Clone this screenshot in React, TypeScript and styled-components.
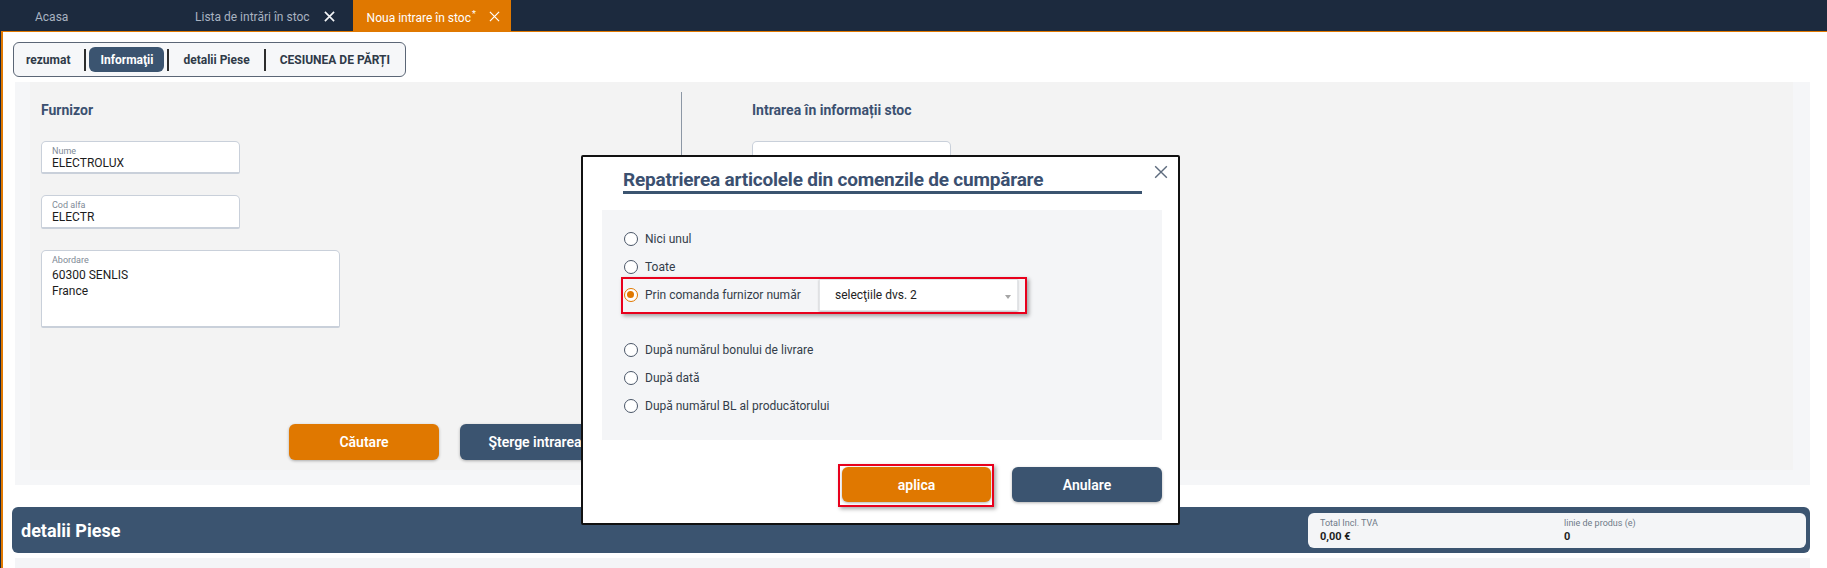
import React from "react";
import styled, { createGlobalStyle } from "styled-components";

const NAVY = "#1c2a3e";
const ORANGE = "#e07800";
const SLATE = "#3b5470";
const TEXT = "#2f3a48";

const GlobalStyle = createGlobalStyle`
  html, body { margin: 0; padding: 0; height: 100%; overflow: hidden; }
  body { font-family: Roboto, "Liberation Sans", Arial, sans-serif; background: ${NAVY}; }
  * { box-sizing: border-box; }
`;

const Page = styled.div`
  display: flex;
  flex-direction: column;
  height: 568px;
  overflow: hidden;
  background: ${NAVY};
`;

const TabBar = styled.div`
  display: flex;
  height: 31px;
  background: ${NAVY};
  flex-shrink: 0;
`;

const HomeTab = styled.div`
  display: flex;
  align-items: center;
  width: 181px;
  padding: 2px 0 0 35px;
  font-size: 12px;
  color: #a9b3c1;
`;

const Tab = styled.div<{ $active?: boolean }>`
  display: flex;
  align-items: center;
  gap: ${(p) => (p.$active ? 13 : 14)}px;
  padding: 2px ${(p) => (p.$active ? 11 : 18)}px 0 14px;
  font-size: 12px;
  color: ${(p) => (p.$active ? "#ffffff" : "#a9b3c1")};
  background: ${(p) => (p.$active ? ORANGE : "transparent")};
  sup { font-size: 9px; margin-left: 1px; }
`;

const CloseIcon = ({ size = 11, color = "#fff", w = 1.5 }: { size?: number; color?: string; w?: number }) => (
  <svg width={size} height={size} viewBox="0 0 12 12">
    <path d="M1 1 L11 11 M11 1 L1 11" stroke={color} strokeWidth={w} fill="none" />
  </svg>
);

const Content = styled.div`
  flex: 1;
  min-height: 0;
  overflow: hidden;
  margin-left: 1px;
  background: #ffffff;
  border-top: 1px solid ${ORANGE};
  border-left: 2px solid ${ORANGE};
  padding: 10px 17px 0 10px;
  display: flex;
  flex-direction: column;
`;

const SubTabs = styled.div`
  display: flex;
  align-items: center;
  align-self: flex-start;
  flex-shrink: 0;
  width: 393px;
  height: 35px;
  padding: 0 1px;
  border: 1px solid #5b6676;
  border-radius: 6px;
  background: #f6f7f9;
`;

const SubTab = styled.div<{ $active?: boolean }>`
  display: flex;
  align-items: center;
  height: 25px;
  padding: 0 11px;
  border-radius: 6px;
  font-size: 12px;
  font-weight: 700;
  color: ${(p) => (p.$active ? "#ffffff" : TEXT)};
  background: ${(p) => (p.$active ? SLATE : "transparent")};
  white-space: nowrap;
`;

const SubSep = styled.span`
  width: 2px;
  height: 22px;
  margin: 0 3px;
  background: #2d2d2d;
`;

const OuterPanel = styled.div`
  flex-shrink: 0;
  margin: 5px 0 0 2px;
  padding: 0 17px 15px 15px;
  background: #f5f6f8;
`;

const InnerPanel = styled.div`
  background: #f3f3f3;
  padding: 10px 0 10px 0;
  display: flex;
  flex-direction: column;
`;

const Columns = styled.div`
  display: flex;
  height: 310px;
`;

const LeftCol = styled.div`
  width: 651px;
  padding: 8px 0 0 11px;
  display: flex;
  flex-direction: column;
`;

const RightCol = styled.div`
  flex: 1;
  border-left: 1px solid #8c97a5;
  padding: 8px 0 0 70px;
  display: flex;
  flex-direction: column;
`;

const Heading = styled.div`
  font-size: 14px;
  font-weight: 700;
  line-height: 20px;
  color: #3b5070;
  margin-bottom: 21px;
`;

const Field = styled.div<{ $w: number; $h: number }>`
  width: ${(p) => p.$w}px;
  height: ${(p) => p.$h}px;
  background: #ffffff;
  border: 1px solid #c9d0da;
  border-bottom-width: 2px;
  border-radius: 5px 5px 2px 2px;
  padding: 4px 10px 0 10px;
  margin-bottom: 21px;
`;

const FieldLabel = styled.div`
  font-size: 9px;
  line-height: 10px;
  color: #808a96;
`;

const FieldValue = styled.div`
  font-size: 12px;
  line-height: 14px;
  color: #1c1c1c;
`;

const AreaValue = styled.div`
  font-size: 12px;
  line-height: 16px;
  color: #1c1c1c;
  margin-top: 2px;
`;

const ButtonRow = styled.div<{ $pad?: number }>`
  display: flex;
  gap: 21px;
  margin-top: 22px;
  padding-left: ${(p) => p.$pad ?? 0}px;
`;

const Button = styled.button<{ $kind: "primary" | "secondary"; $w: number; $h: number }>`
  width: ${(p) => p.$w}px;
  height: ${(p) => p.$h}px;
  border: none;
  border-radius: 6px;
  background: ${(p) => (p.$kind === "primary" ? ORANGE : SLATE)};
  color: #ffffff;
  font-family: Roboto, sans-serif;
  font-size: 14px;
  font-weight: 600;
  box-shadow: 0 1px 3px rgba(0, 0, 0, 0.3);
  white-space: nowrap;
  overflow: hidden;
  padding: 0;
`;

const SectionBar = styled.div`
  flex-shrink: 0;
  margin: 22px 0 0 -1px;
  height: 46px;
  background: ${SLATE};
  border-radius: 6px;
  display: flex;
  align-items: center;
  justify-content: space-between;
  padding: 0 4px 0 9px;
`;

const SectionTitle = styled.div`
  font-size: 18px;
  font-weight: 700;
  color: #ffffff;
`;

const Summary = styled.div`
  width: 498px;
  height: 35px;
  background: #f4f5f7;
  border-radius: 6px;
  display: grid;
  grid-template-columns: 244px 1fr;
  padding: 4px 12px 0;
`;

const SumLabel = styled.div`
  font-size: 9px;
  line-height: 12px;
  color: #6f7a88;
`;

const SumValue = styled.div`
  font-size: 11px;
  line-height: 16px;
  font-weight: 700;
  color: #1e1e1e;
`;

const BottomPanel = styled.div`
  flex-shrink: 0;
  margin: 5px 0 0 2px;
  height: 40px;
  background: #f4f5f7;
`;

/* Dialog */

const Dialog = styled.div`
  position: fixed;
  left: 581px;
  top: 155px;
  width: 599px;
  height: 370px;
  background: #ffffff;
  border: 2px solid #111;
  border-radius: 2px;
  padding: 12px 16px 21px 19px;
  display: flex;
  flex-direction: column;
`;

const DialogClose = styled.button`
  position: absolute;
  top: 8px;
  right: 10px;
  width: 14px;
  height: 14px;
  padding: 0;
  border: none;
  background: transparent;
  display: flex;
`;

const DialogTitle = styled.div`
  margin: 0 20px 0 21px;
  font-size: 19px;
  line-height: 22px;
  font-weight: 700;
  color: #3b5070;
  letter-spacing: -0.2px;
  border-bottom: 3px solid ${SLATE};
  white-space: nowrap;
`;

const OptionsPanel = styled.div`
  margin-top: 16px;
  height: 230px;
  background: #f4f5f7;
  padding: 15px 22px 20px 22px;
  display: flex;
  flex-direction: column;
`;

const OptionRow = styled.div<{ $gapAfter?: boolean; $highlight?: boolean }>`
  position: relative;
  display: flex;
  align-items: center;
  height: 28px;
  margin-bottom: ${(p) => (p.$gapAfter ? 28 : 0)}px;
  align-self: flex-start;
  ${(p) =>
    p.$highlight &&
    `
    &::after {
      content: "";
      position: absolute;
      inset: -4px -9px -5px -3px;
      border: 2px solid #e8001c;
      box-shadow: 2px 2px 4px rgba(0,0,0,0.35);
      pointer-events: none;
    }
  `}
`;

const OptionLabel = styled.label<{ $w?: number }>`
  display: flex;
  align-items: center;
  gap: 7px;
  font-size: 12px;
  color: #333d4a;
  width: ${(p) => (p.$w ? `${p.$w}px` : "auto")};
`;

const Radio = styled.span<{ $checked?: boolean }>`
  position: relative;
  width: 14px;
  height: 14px;
  border-radius: 50%;
  border: 1.5px solid ${(p) => (p.$checked ? ORANGE : "#4a5668")};
  background: #fff;
  flex-shrink: 0;
  &::after {
    content: "";
    display: ${(p) => (p.$checked ? "block" : "none")};
    position: absolute;
    left: 2px;
    top: 2px;
    width: 7px;
    height: 7px;
    border-radius: 50%;
    background: ${ORANGE};
  }
`;

const Select = styled.div`
  position: relative;
  width: 199px;
  height: 32px;
  background: #ffffff;
  border: 1px solid #e3e5e8;
  box-shadow: 0 1px 2px rgba(0, 0, 0, 0.25);
  display: flex;
  align-items: center;
  padding-left: 15px;
  font-size: 12px;
  color: #222;
  &::after {
    content: "";
    position: absolute;
    right: 6px;
    top: 15px;
    border-left: 3.5px solid transparent;
    border-right: 3.5px solid transparent;
    border-top: 4px solid #a5a5a5;
  }
`;

const DialogActions = styled.div`
  margin-top: 27px;
  display: flex;
  justify-content: flex-end;
  gap: 21px;
`;

const Highlight = styled.div`
  position: relative;
  display: flex;
  &::after {
    content: "";
    position: absolute;
    inset: -3px -3px -5px -4px;
    border: 2px solid #e8001c;
    box-shadow: 2px 2px 4px rgba(0, 0, 0, 0.35);
    pointer-events: none;
  }
`;

const options = [
  { label: "Nici unul" },
  { label: "Toate" },
  { label: "Prin comanda furnizor număr", checked: true, select: true },
  { label: "După numărul bonului de livrare" },
  { label: "După dată" },
  { label: "După numărul BL al producătorului" },
];

export default function App() {
  return (
    <>
      <GlobalStyle />
      <Page>
        <TabBar>
          <HomeTab>Acasa</HomeTab>
          <Tab>
            Lista de intrări în stoc
            <CloseIcon size={11} color="#f2f4f7" w={1.8} />
          </Tab>
          <Tab $active>
            <span>
              Noua intrare în stoc<sup>*</sup>
            </span>
            <CloseIcon size={11} color="#ffffff" w={1.3} />
          </Tab>
        </TabBar>
        <Content>
          <SubTabs>
            <SubTab>rezumat</SubTab>
            <SubSep />
            <SubTab $active>Informaţii</SubTab>
            <SubSep />
            <SubTab>detalii Piese</SubTab>
            <SubSep />
            <SubTab>CESIUNEA DE PĂRȚI</SubTab>
          </SubTabs>
          <OuterPanel>
            <InnerPanel>
              <Columns>
                <LeftCol>
                  <Heading>Furnizor</Heading>
                  <Field $w={199} $h={33}>
                    <FieldLabel>Nume</FieldLabel>
                    <FieldValue>ELECTROLUX</FieldValue>
                  </Field>
                  <Field $w={199} $h={34}>
                    <FieldLabel>Cod alfa</FieldLabel>
                    <FieldValue>ELECTR</FieldValue>
                  </Field>
                  <Field $w={299} $h={78}>
                    <FieldLabel>Abordare</FieldLabel>
                    <AreaValue>
                      60300 SENLIS
                      <br />
                      France
                    </AreaValue>
                  </Field>
                </LeftCol>
                <RightCol>
                  <Heading>Intrarea în informații stoc</Heading>
                  <Field $w={199} $h={33} />
                </RightCol>
              </Columns>
              <ButtonRow $pad={259}>
                <Button $kind="primary" $w={150} $h={36}>
                  Căutare
                </Button>
                <Button $kind="secondary" $w={150} $h={36}>
                  Şterge intrarea
                </Button>
              </ButtonRow>
            </InnerPanel>
          </OuterPanel>
          <SectionBar>
            <SectionTitle>detalii Piese</SectionTitle>
            <Summary>
              <div>
                <SumLabel>Total Incl. TVA</SumLabel>
                <SumValue>0,00 €</SumValue>
              </div>
              <div>
                <SumLabel>linie de produs (e)</SumLabel>
                <SumValue>0</SumValue>
              </div>
            </Summary>
          </SectionBar>
          <BottomPanel />
        </Content>
        <Dialog>
          <DialogClose aria-label="close">
            <CloseIcon size={14} color="#5d6b7d" w={1.2} />
          </DialogClose>
          <DialogTitle>Repatrierea articolele din comenzile de cumpărare</DialogTitle>
          <OptionsPanel>
            {options.map((o) => (
              <OptionRow key={o.label} $gapAfter={!!o.select} $highlight={!!o.select}>
                <OptionLabel $w={o.select ? 195 : undefined}>
                  <Radio $checked={!!o.checked} />
                  {o.label}
                </OptionLabel>
                {o.select && <Select>selecţiile dvs. 2</Select>}
              </OptionRow>
            ))}
          </OptionsPanel>
          <DialogActions>
            <Highlight>
              <Button $kind="primary" $w={149} $h={35}>
                aplica
              </Button>
            </Highlight>
            <Button $kind="secondary" $w={150} $h={35}>
              Anulare
            </Button>
          </DialogActions>
        </Dialog>
      </Page>
    </>
  );
}
